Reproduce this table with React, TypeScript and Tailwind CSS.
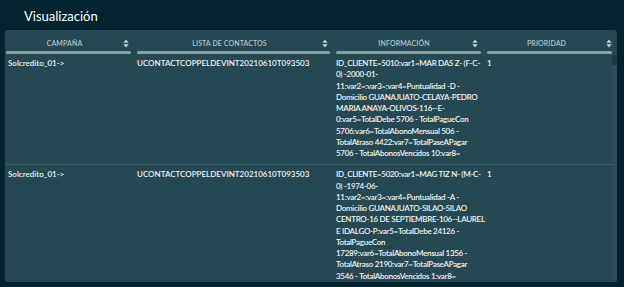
import React from "react";

const row1 = [
  "ID_CLIENTE=5010:var1=MAR DAS Z- (F-C-",
  "0) -2000-01-",
  "11:var2=:var3=:var4=Puntualidad -D -",
  "Domicilio GUANAJUATO-CELAYA-PEDRO",
  "MARIA ANAYA-OLIVOS-116--E-",
  "0:var5=TotalDebe 5706 - TotalPagueCon",
  "5706:var6=TotalAbonoMensual 506 -",
  "TotalAtraso 4422:var7=TotalPaseAPagar",
  "5706 - TotalAbonosVencidos 10:var8=",
];

const row2 = [
  "ID_CLIENTE=5020:var1=MAG TIZ N- (M-C-",
  "0) -1974-06-",
  "11:var2=:var3=:var4=Puntualidad -A -",
  "Domicilio GUANAJUATO-SILAO-SILAO",
  "CENTRO-16 DE SEPTIEMBRE-106--LAUREL",
  "E IDALGO-P:var5=TotalDebe 24126 -",
  "TotalPagueCon",
  "17289:var6=TotalAbonoMensual 1356 -",
  "TotalAtraso 2190:var7=TotalPaseAPagar",
  "3546 - TotalAbonosVencidos 1:var8=",
];

function SortIcon() {
  return (
    <svg width="6" height="9" viewBox="0 0 6 9" className="shrink-0">
      <path d="M3 0.5 L5.6 3.8 L0.4 3.8 Z" fill="#c9d5d8" />
      <path d="M3 8.5 L5.6 5.2 L0.4 5.2 Z" fill="#c9d5d8" />
    </svg>
  );
}

function HeaderCell({ label, w, pl, pr, iconPr }: { label: string; w: string; pl: string; pr: string; iconPr: string }) {
  return (
    <div className={`${w} ${pl} ${pr} flex flex-col shrink-0`}>
      <div className={`flex items-center h-[8px] mt-[9px] ${iconPr}`}>
        <div className="flex-1 text-center text-[7px] leading-[8px] tracking-[0.1px] text-[#b4c4c8] font-semibold">{label}</div>
        <SortIcon />
      </div>
      <div className="mt-[4px] h-[3px] rounded-full bg-[#8aa1a6]" />
    </div>
  );
}

function Row({ lines, border }: { lines: string[]; border?: boolean }) {
  return (
    <div className={`flex text-[8px] leading-[11.25px] text-[#eef3f4] font-semibold pt-[4px] pb-[5px] ${border ? "border-b border-[#3e5f68]" : ""}`}>
      <div className="w-[129px] shrink-0 pl-[3px] whitespace-nowrap">Solcredito_01-&gt;</div>
      <div className="w-[199px] shrink-0 pl-[3px] whitespace-nowrap">UCONTACTCOPPELDEVINT20210610T093503</div>
      <div className="w-[151px] shrink-0 pl-[3px] whitespace-nowrap tracking-[-0.3px]">
        {lines.map((l, i) => (
          <div key={i}>{l}</div>
        ))}
      </div>
      <div className="w-[128px] shrink-0 pl-[3px]">1</div>
    </div>
  );
}

export default function App() {
  return (
    <div className="w-[624px] h-[287px] bg-[#032330] overflow-hidden" style={{ fontFamily: "Lato, 'Noto Sans', sans-serif" }}>
      <div className="pl-[24px] pt-[7px] h-[18px] text-[13px] leading-[18px] text-white box-content">Visualización</div>
      <div className="ml-[5px] mt-[5px] w-[612px] h-[252px] rounded-[3px] bg-[#264852] overflow-hidden flex flex-col">
        <div className="flex">
          <HeaderCell label="CAMPAÑA" w="w-[129px]" pl="pl-[1px]" pr="pr-[3px]" iconPr="pr-[2px]" />
          <HeaderCell label="LISTA DE CONTACTOS" w="w-[199px]" pl="pl-[3px]" pr="pr-[3px]" iconPr="pr-[2px]" />
          <HeaderCell label="INFORMACIÓN" w="w-[151px]" pl="pl-[3px]" pr="pr-[3px]" iconPr="pr-[3px]" />
          <HeaderCell label="PRIORIDAD" w="w-[128px]" pl="pl-[3px]" pr="pr-0" iconPr="pr-[0px]" />
        </div>
        <div className="flex flex-1 min-h-0">
          <div className="w-[607px] flex flex-col overflow-hidden">
            <Row lines={row1} border />
            <Row lines={row2} />
          </div>
          <div className="w-[5px] bg-[#2c4e58] flex flex-col">
            <div className="mt-[1px] h-[10px] bg-[#1d3a43]" />
          </div>
        </div>
      </div>
    </div>
  );
}
